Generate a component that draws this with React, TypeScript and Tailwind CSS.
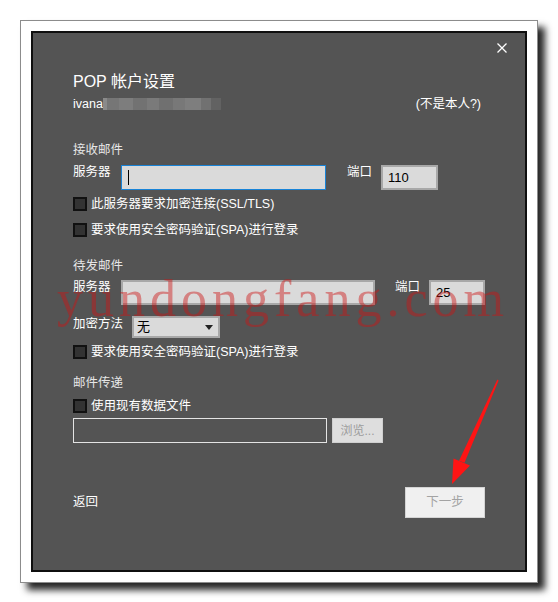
import React from 'react';

const Checkbox = ({ label }: { label: string }) => (
  <div className="flex items-center h-[14px]">
    <div className="w-[14px] h-[14px] border-2 border-[#111] bg-[#333]" />
    <span className="ml-[4px] text-[12.5px] leading-[14px] text-white">{label}</span>
  </div>
);

const App = () => {
  return (
    <div className="relative min-h-screen bg-white font-[family-name:'Liberation_Sans','Noto_Sans_CJK_SC',sans-serif]">
      <div className="pt-[20px] pl-[20px]">
        {/* outer white frame */}
        <div className="w-[518px] h-[563px] border border-[#8c8c8c] bg-white p-[10px] shadow-[7px_7px_7px_rgba(0,0,0,0.85)]">
          {/* dialog */}
          <div className="h-full border-2 border-[#0f0f0f] bg-[#545454] text-white flex flex-col">
            <div className="flex justify-end pt-[10px] pr-[18px]">
              <svg width="10" height="10" viewBox="0 0 10 10">
                <path d="M0.5 0.5 L9.5 9.5 M9.5 0.5 L0.5 9.5" stroke="#fff" strokeWidth="1.3" />
              </svg>
            </div>

            <div className="px-[40px] flex flex-col">
              <div className="mt-[18px] h-[22px] text-[16px] leading-[22px]">POP 帐户设置</div>

              <div className="mt-[2px] h-[18px] flex items-center justify-between text-[12.5px]">
                <div className="flex items-center">
                  <span>ivana</span>
                  <div className="flex h-[12px]">
                    <div className="w-[4px] bg-[#8a8a8a]" />
                    <div className="w-[12px] bg-[#767676]" />
                    <div className="w-[14px] bg-[#7d7d7d]" />
                    <div className="w-[14px] bg-[#727272]" />
                    <div className="w-[12px] bg-[#7a7a7a]" />
                    <div className="w-[14px] bg-[#707070]" />
                    <div className="w-[12px] bg-[#787878]" />
                    <div className="w-[16px] bg-[#7e7e7e]" />
                    <div className="w-[10px] bg-[#717171]" />
                    <div className="w-[10px] bg-[#626262]" />
                  </div>
                </div>
                <span className="mr-[4px]">(不是本人?)</span>
              </div>

              {/* incoming */}
              <div className="mt-[28px] h-[18px] text-[12.5px] leading-[18px] text-[#e6e6e6]">接收邮件</div>
              <div className="mt-[6px] flex items-start h-[25px] text-[12.5px]">
                <span className="w-[48px] leading-[14px] whitespace-nowrap">服务器</span>
                <div className="w-[205px] h-[25px] bg-[#dadada] border border-[#1883d7] flex items-center pl-[6px]">
                  <div className="w-[1px] h-[15px] bg-black" />
                </div>
                <span className="ml-[21px] w-[34px] leading-[14px] whitespace-nowrap">端口</span>
                <div className="w-[57px] h-[25px] bg-[#dadada] border-2 border-[#a8a8a8] flex items-center pl-[5px] text-black text-[13px]">110</div>
              </div>
              <div className="mt-[7px]"><Checkbox label="此服务器要求加密连接(SSL/TLS)" /></div>
              <div className="mt-[12px]"><Checkbox label="要求使用安全密码验证(SPA)进行登录" /></div>

              {/* outgoing */}
              <div className="mt-[20px] h-[18px] text-[12.5px] leading-[18px] text-[#e6e6e6]">待发邮件</div>
              <div className="mt-[5px] flex items-start h-[25px] text-[12.5px]">
                <span className="w-[48px] leading-[14px] whitespace-nowrap">服务器</span>
                <div className="w-[254px] h-[25px] bg-[#dadada] border-2 border-[#a8a8a8]" />
                <span className="ml-[20px] w-[34px] leading-[14px] whitespace-nowrap">端口</span>
                <div className="w-[56px] h-[25px] bg-[#dadada] border-2 border-[#a8a8a8] flex items-center pl-[5px] text-black text-[13px]">25</div>
              </div>
              <div className="mt-[11px] flex items-start h-[22px] text-[12.5px]">
                <span className="w-[59px] leading-[16px] whitespace-nowrap">加密方法</span>
                <div className="w-[88px] h-[22px] bg-[#dadada] border-2 border-[#a8a8a8] flex items-center justify-between pl-[3px] pr-[5px] text-black text-[13px]">
                  <span>无</span>
                  <svg width="8" height="5" viewBox="0 0 8 5">
                    <path d="M0 0 L8 0 L4 5 Z" fill="#222" />
                  </svg>
                </div>
              </div>
              <div className="mt-[7px]"><Checkbox label="要求使用安全密码验证(SPA)进行登录" /></div>

              {/* delivery */}
              <div className="mt-[15px] h-[18px] text-[12.5px] leading-[18px] text-[#e6e6e6]">邮件传递</div>
              <div className="mt-[7px]"><Checkbox label="使用现有数据文件" /></div>
              <div className="mt-[5px] flex items-center h-[25px]">
                <div className="w-[254px] h-[25px] border border-[#e4e4e4]" />
                <div className="ml-[5px] w-[51px] h-[25px] bg-[#dedede] border border-[#cfcfcf] flex items-center justify-center text-[12px] text-[#9c9c9c]">浏览...</div>
              </div>

              <div className="mt-[44px] flex items-center justify-between h-[31px] text-[12.5px]">
                <span>返回</span>
                <div className="w-[80px] h-[31px] bg-[#f0f0f0] border border-[#d4d4d4] flex items-center justify-center text-[#a3a3a3]">下一步</div>
              </div>
            </div>
          </div>
        </div>
      </div>

      {/* watermark */}
      <div className="absolute left-[57px] top-[273px] pointer-events-none font-[family-name:'Liberation_Serif',serif] text-[52px] leading-none tracking-[5px] text-[rgba(205,20,20,0.45)] whitespace-nowrap">
        yundongfang.com
      </div>

      {/* red arrow annotation */}
      <svg className="absolute left-0 top-0 pointer-events-none" width="558" height="602">
        <path d="M497.4 379.6 L498.6 380.4 L464.5 462.8 L459 460.8 Z" fill="#ff1414" />
        <path d="M452 484 L453.5 458.4 L470 465.6 Z" fill="#ff1414" />
      </svg>
    </div>
  );
};

export default App;
